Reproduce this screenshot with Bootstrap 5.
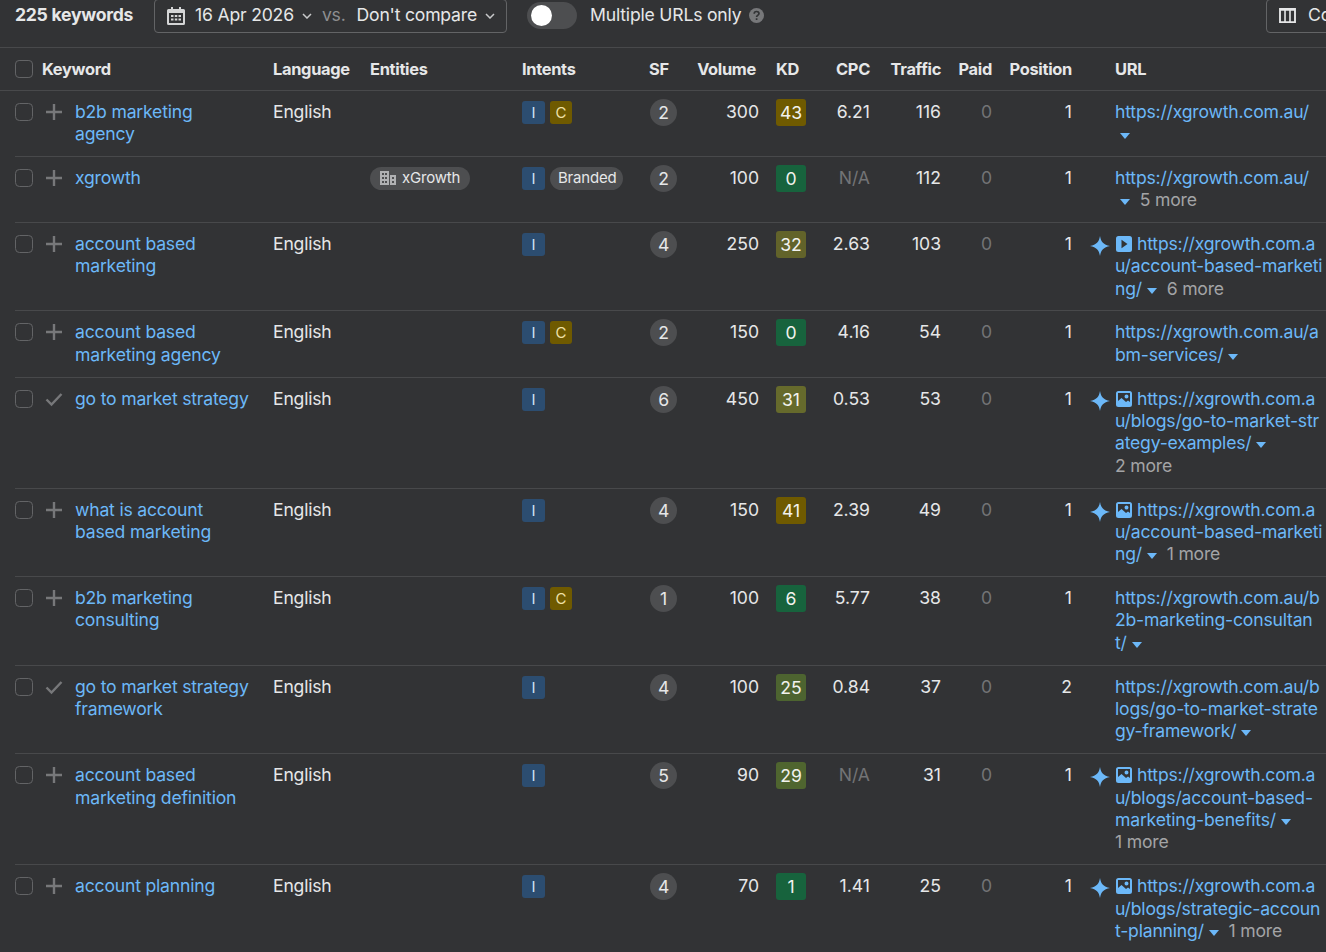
<!DOCTYPE html>
<html lang="en" data-bs-theme="dark">
<head>
    <meta charset="UTF-8" />
    <title>Keywords</title>
    <meta name="viewport" content="width=device-width, initial-scale=1" />
    <link href="https://cdn.jsdelivr.net/npm/bootstrap@5.3.2/dist/css/bootstrap.min.css" rel="stylesheet">
    <style>
        html, body { height: 100%; overflow: hidden; }
        body {
          background: #323335;
          color: #e6e7e8;
          font-family: "Inter", "Liberation Sans", sans-serif;
          font-size: 17.6px;
          line-height: 22.4px;
          letter-spacing: -.2px;
        }
        a { color: #6cb8f8; text-decoration: none; }
        svg { flex-shrink: 0; }

        /* top bar */
        .top-bar {
          width: 1390px;
          height: 58px;
          margin-top: -10px;
          padding: 0 0 6px 15px;
          border-bottom: 1px solid #48494b;
        }
        .kw-count { font-weight: 700; letter-spacing: -.27px; margin-right: 21px; }
        .bar-btn {
          height: 34px;
          border: 1px solid #636466;
          border-radius: 4px;
          padding: 0 12px;
          white-space: nowrap;
        }
        .date-btn { width: 353px; }
        .date-icon { margin-right: 10px; }
        .vs-sep { margin: 0 11px 0 10px; color: #8d8e90; }
        .bar-switch {
          width: 50px;
          height: 27px;
          margin: 0 13px 0 20px;
          border-radius: 14px;
          background: #4d4e50;
        }
        .bar-switch i { width: 21px; height: 21px; margin-left: 4px; border-radius: 50%; background: #fff; }
        .cols-btn { width: 124px; }

        /* table */
        .kw-table {
          --bs-table-bg: transparent;
          --bs-table-color: #e6e7e8;
          --bs-table-border-color: #48494b;
          table-layout: fixed;
          width: 1375px;
          margin: 0 0 0 15px;
        }
        .kw-table > thead > tr > th {
          height: 42px;
          padding: 0;
          vertical-align: middle;
          font-weight: 700;
          font-size: 16.4px;
          letter-spacing: -.3px;
          color: #e6e7e8;
          border-bottom: 1px solid #48494b;
        }
        .kw-table > thead > tr > th:first-child { position: relative; }
        .kw-table > thead > tr > th:first-child::before {
          content: "";
          position: absolute;
          left: -15px;
          bottom: -1px;
          width: 15px;
          height: 1px;
          background: #48494b;
        }
        .kw-table > thead > tr > th.vol-head { padding-right: 3px; }
        .kw-table > tbody > tr > td {
          padding: 10px 0 10.35px;
          vertical-align: top;
          border-bottom: 1px solid #48494b;
          box-shadow: none;
        }
        .kw-table .num { text-align: right; letter-spacing: 0; }
        .kw-table th.num { letter-spacing: -.3px; }
        .kw-table .kd-cell { padding-left: 17px; }
        .kw-table .url-cell { padding-left: 43px; white-space: nowrap; }
        .kw-table .muted-val { color: #737476; }

        .kw-check {
          width: 18px;
          height: 18px;
          margin: 2px 12px 0 0;
          border: 1px solid #636466;
          border-radius: 4px;
          background: transparent;
          flex-shrink: 0;
        }
        .kw-head-check { margin: 0 9px 0 0; }
        .kw-act { width: 18px; margin: 2px 12px 0 0; color: #77787a; }
        .kw-text { width: 176px; }

        .intent-tag {
          display: inline-block;
          width: 23px;
          height: 23px;
          margin-right: 5px;
          border-radius: 3px;
          font-size: 15px;
          line-height: 23px;
          text-align: center;
          vertical-align: top;
        }
        .intent-i { background: #2c4d70; color: #cfe3f5; }
        .intent-c { width: 22px; background: #6f5a00; color: #eee1a8; }
        .soft-pill {
          display: inline-flex;
          align-items: center;
          height: 23px;
          border-radius: 12px;
          background: #4d4e50;
          font-size: 15px;
          vertical-align: top;
        }
        .pill-entity { gap: 6px; width: 100px; padding-left: 10px; }
        .pill-brand { padding: 0 7px 0 8px; }
        .serp-dot {
          display: block;
          width: 27px;
          height: 27px;
          margin: -2px 0 0 1px;
          border-radius: 50%;
          background: #4d4e50;
          text-align: center;
          line-height: 27px;
        }
        .kd-box {
          display: block;
          width: 30px;
          height: 27px;
          margin-top: -2px;
          border-radius: 3px;
          color: #f2f2ee;
          text-align: center;
          line-height: 28px;
          letter-spacing: 0;
        }
        .kd-green { background: #17633d; }
        .kd-amber { background: #6f5a00; }
        .kd-32 { background: #62632a; }
        .kd-31 { background: #666a2c; }
        .kd-25 { background: #4d6430; }
        .kd-29 { background: #4f652f; }
        .url-wrap { position: relative; display: block; }
        .ai-star { position: absolute; left: -25px; top: 3px; color: #6cb8f8; }
        .url-type { margin: 0 5px 0 1px; vertical-align: -2px; color: #6cb8f8; }
        .url-caret { display: inline-block; margin: 0 5px; vertical-align: 1px; color: #6cb8f8; }
        .more-text { color: #a3a4a6; }
    </style>
</head>
<body>

<svg width="0" height="0" class="d-block">
    <defs>
        <symbol id="ic-plus" viewBox="0 0 18 18"><path d="M9 1v16M1 9h16" stroke="currentColor" stroke-width="2.400" fill="none"/></symbol>
        <symbol id="ic-check" viewBox="0 0 18 18"><path d="M1.500 9.500l5 5L16.500 4" stroke="currentColor" stroke-width="2.400" fill="none"/></symbol>
        <symbol id="ic-star" viewBox="0 0 20 20"><path d="M10 0c1 6 3.500 8.500 10 10-6.500 1.500-9 4-10 10-1-6-3.500-8.500-10-10C6.500 8.500 9 6 10 0z" fill="currentColor"/></symbol>
        <symbol id="ic-play" viewBox="0 0 16 16"><rect width="16" height="16" rx="2.500" fill="currentColor"/><path d="M5.500 3.800l6 4.200-6 4.200z" fill="#323335"/></symbol>
        <symbol id="ic-img" viewBox="0 0 16 16"><path fill-rule="evenodd" d="M2.500 0h11A2.500 2.500 0 0 1 16 2.500v11a2.500 2.500 0 0 1-2.500 2.500h-11A2.500 2.500 0 0 1 0 13.500v-11A2.500 2.500 0 0 1 2.500 0zM2 2v8l3.500-3 4.500 4 2-1.500 2 1.500V2zm8.500 1.500a2 2 0 1 1 0 4 2 2 0 0 1 0-4z" fill="currentColor"/></symbol>
        <symbol id="ic-caret" viewBox="0 0 10 6"><path d="M0 0h10L5 6z" fill="currentColor"/></symbol>
    </defs>
</svg>

<!-- Top bar -->
<div class="top-bar d-flex align-items-center">
    <span class="kw-count">225 keywords</span>
    <div class="bar-btn date-btn d-flex align-items-center">
        <svg width="18" height="18" viewBox="0 0 18 18" class="date-icon"><path fill-rule="evenodd" d="M4 0h2v2h6V0h2v2h2.500A1.500 1.500 0 0 1 18 3.500v13a1.500 1.500 0 0 1-1.500 1.500h-15A1.500 1.500 0 0 1 0 16.500v-13A1.500 1.500 0 0 1 1.500 2H4zM2 6v10h14V6zm2 2h2.500v2H4zm3.800 0h2.500v2H7.800zm3.700 0H14v2h-2.500zM4 11.500h2.500v2H4zm3.800 0h2.500v2H7.800zm3.700 0H14v2h-2.500z" fill="#d4d5d6"/></svg>
        <span>16 Apr 2026</span>
        <svg width="10" height="6" viewBox="0 0 10 6" class="ms-2"><path d="M1 1l4 4 4-4" stroke="#c8c9ca" stroke-width="1.500" fill="none"/></svg>
        <span class="vs-sep">vs.</span>
        <span>Don't compare</span>
        <svg width="10" height="6" viewBox="0 0 10 6" class="ms-2"><path d="M1 1l4 4 4-4" stroke="#c8c9ca" stroke-width="1.500" fill="none"/></svg>
    </div>
    <div class="bar-switch d-flex align-items-center"><i></i></div>
    <span>Multiple URLs only</span>
    <svg width="15" height="15" viewBox="0 0 15 15" class="ms-2"><circle cx="7.500" cy="7.500" r="7.500" fill="#77787a"/><path d="M5.200 5.800c0-3 4.800-3 4.800-.2 0 1.800-2.400 1.800-2.400 3.400M7.600 10.300v1.700" stroke="#323335" stroke-width="1.700" fill="none"/></svg>
    <div class="bar-btn cols-btn d-flex align-items-center ms-auto flex-shrink-0">
        <svg width="17" height="15" viewBox="0 0 18 16" class="me-2"><path fill-rule="evenodd" d="M0 0h18v16H0zm2 3v11h3.500V3zm5.200 0v11h3.600V3zm5.300 0v11H16V3z" fill="#e6e7e8"/></svg>
        <span class="ms-1">Columns</span>
    </div>
</div>

<!-- Keywords table -->
<table class="table kw-table">
    <colgroup>
        <col style="width:258px"><col style="width:97px"><col style="width:152px"><col style="width:127px"><col style="width:48px">
        <col style="width:62px"><col style="width:61px"><col style="width:50px"><col style="width:71px"><col style="width:51px"><col style="width:80px"><col>
    </colgroup>
    <thead>
        <tr>
            <th><div class="d-flex align-items-center"><input type="checkbox" class="kw-check kw-head-check form-check-input"><span>Keyword</span></div></th>
            <th>Language</th>
            <th>Entities</th>
            <th>Intents</th>
            <th>SF</th>
            <th class="num vol-head">Volume</th>
            <th class="kd-cell">KD</th>
            <th class="num">CPC</th>
            <th class="num">Traffic</th>
            <th class="num">Paid</th>
            <th class="num">Position</th>
            <th class="url-cell">URL</th>
        </tr>
    </thead>
    <tbody>
        <tr>
            <td><div class="d-flex"><input type="checkbox" class="kw-check form-check-input"><svg class="kw-act" height="18"><use href="#ic-plus"/></svg><a class="kw-text" href="#">b2b marketing agency</a></div></td>
            <td>English</td>
            <td></td>
            <td><span class="intent-tag intent-i">I</span><span class="intent-tag intent-c">C</span></td>
            <td><span class="serp-dot">2</span></td>
            <td class="num">300</td>
            <td class="kd-cell"><span class="kd-box kd-amber">43</span></td>
            <td class="num">6.21</td>
            <td class="num">116</td>
            <td class="num muted-val">0</td>
            <td class="num">1</td>
            <td class="url-cell"><a class="url-wrap" href="#">https://xgrowth.com.au/<br><svg class="url-caret" width="10" height="6"><use href="#ic-caret"/></svg></a></td>
        </tr>
        <tr>
            <td><div class="d-flex"><input type="checkbox" class="kw-check form-check-input"><svg class="kw-act" height="18"><use href="#ic-plus"/></svg><a class="kw-text" href="#">xgrowth</a></div></td>
            <td></td>
            <td><span class="soft-pill pill-entity"><svg width="16" height="14" viewBox="0 0 16 14"><path fill-rule="evenodd" d="M0 0h9v14H0zm2 2v2h2V2zm3 0v2h2V2zM2 6v2h2V6zm3 0v2h2V6zm-3 4v2h2v-2zm3 0v2h2v-2zm5-6h6v10h-6zm2 2v2h2V6zm0 4v2h2v-2z" fill="#b0b1b3"/></svg>xGrowth</span></td>
            <td><span class="intent-tag intent-i">I</span><span class="soft-pill pill-brand">Branded</span></td>
            <td><span class="serp-dot">2</span></td>
            <td class="num">100</td>
            <td class="kd-cell"><span class="kd-box kd-green">0</span></td>
            <td class="num muted-val">N/A</td>
            <td class="num">112</td>
            <td class="num muted-val">0</td>
            <td class="num">1</td>
            <td class="url-cell"><a class="url-wrap" href="#">https://xgrowth.com.au/<br><svg class="url-caret" width="10" height="6"><use href="#ic-caret"/></svg> <span class="more-text">5 more</span></a></td>
        </tr>
        <tr>
            <td><div class="d-flex"><input type="checkbox" class="kw-check form-check-input"><svg class="kw-act" height="18"><use href="#ic-plus"/></svg><a class="kw-text" href="#">account based marketing</a></div></td>
            <td>English</td>
            <td></td>
            <td><span class="intent-tag intent-i">I</span></td>
            <td><span class="serp-dot">4</span></td>
            <td class="num">250</td>
            <td class="kd-cell"><span class="kd-box kd-32">32</span></td>
            <td class="num">2.63</td>
            <td class="num">103</td>
            <td class="num muted-val">0</td>
            <td class="num">1</td>
            <td class="url-cell"><a class="url-wrap" href="#"><svg class="ai-star" width="20" height="20"><use href="#ic-star"/></svg><svg class="url-type" width="16" height="16"><use href="#ic-play"/></svg>https://xgrowth.com.a<br>u/account-based-marketi<br>ng/<svg class="url-caret" width="10" height="6"><use href="#ic-caret"/></svg> <span class="more-text">6 more</span></a></td>
        </tr>
        <tr>
            <td><div class="d-flex"><input type="checkbox" class="kw-check form-check-input"><svg class="kw-act" height="18"><use href="#ic-plus"/></svg><a class="kw-text" href="#">account based marketing agency</a></div></td>
            <td>English</td>
            <td></td>
            <td><span class="intent-tag intent-i">I</span><span class="intent-tag intent-c">C</span></td>
            <td><span class="serp-dot">2</span></td>
            <td class="num">150</td>
            <td class="kd-cell"><span class="kd-box kd-green">0</span></td>
            <td class="num">4.16</td>
            <td class="num">54</td>
            <td class="num muted-val">0</td>
            <td class="num">1</td>
            <td class="url-cell"><a class="url-wrap" href="#">https://xgrowth.com.au/a<br>bm-services/<svg class="url-caret" width="10" height="6"><use href="#ic-caret"/></svg></a></td>
        </tr>
        <tr>
            <td><div class="d-flex"><input type="checkbox" class="kw-check form-check-input"><svg class="kw-act" height="18"><use href="#ic-check"/></svg><a class="kw-text" href="#">go to market strategy</a></div></td>
            <td>English</td>
            <td></td>
            <td><span class="intent-tag intent-i">I</span></td>
            <td><span class="serp-dot">6</span></td>
            <td class="num">450</td>
            <td class="kd-cell"><span class="kd-box kd-31">31</span></td>
            <td class="num">0.53</td>
            <td class="num">53</td>
            <td class="num muted-val">0</td>
            <td class="num">1</td>
            <td class="url-cell"><a class="url-wrap" href="#"><svg class="ai-star" width="20" height="20"><use href="#ic-star"/></svg><svg class="url-type" width="16" height="16"><use href="#ic-img"/></svg>https://xgrowth.com.a<br>u/blogs/go-to-market-str<br>ategy-examples/<svg class="url-caret" width="10" height="6"><use href="#ic-caret"/></svg><br><span class="more-text">2 more</span></a></td>
        </tr>
        <tr>
            <td><div class="d-flex"><input type="checkbox" class="kw-check form-check-input"><svg class="kw-act" height="18"><use href="#ic-plus"/></svg><a class="kw-text" href="#">what is account based marketing</a></div></td>
            <td>English</td>
            <td></td>
            <td><span class="intent-tag intent-i">I</span></td>
            <td><span class="serp-dot">4</span></td>
            <td class="num">150</td>
            <td class="kd-cell"><span class="kd-box kd-amber">41</span></td>
            <td class="num">2.39</td>
            <td class="num">49</td>
            <td class="num muted-val">0</td>
            <td class="num">1</td>
            <td class="url-cell"><a class="url-wrap" href="#"><svg class="ai-star" width="20" height="20"><use href="#ic-star"/></svg><svg class="url-type" width="16" height="16"><use href="#ic-img"/></svg>https://xgrowth.com.a<br>u/account-based-marketi<br>ng/<svg class="url-caret" width="10" height="6"><use href="#ic-caret"/></svg> <span class="more-text">1 more</span></a></td>
        </tr>
        <tr>
            <td><div class="d-flex"><input type="checkbox" class="kw-check form-check-input"><svg class="kw-act" height="18"><use href="#ic-plus"/></svg><a class="kw-text" href="#">b2b marketing consulting</a></div></td>
            <td>English</td>
            <td></td>
            <td><span class="intent-tag intent-i">I</span><span class="intent-tag intent-c">C</span></td>
            <td><span class="serp-dot">1</span></td>
            <td class="num">100</td>
            <td class="kd-cell"><span class="kd-box kd-green">6</span></td>
            <td class="num">5.77</td>
            <td class="num">38</td>
            <td class="num muted-val">0</td>
            <td class="num">1</td>
            <td class="url-cell"><a class="url-wrap" href="#">https://xgrowth.com.au/b<br>2b-marketing-consultan<br>t/<svg class="url-caret" width="10" height="6"><use href="#ic-caret"/></svg></a></td>
        </tr>
        <tr>
            <td><div class="d-flex"><input type="checkbox" class="kw-check form-check-input"><svg class="kw-act" height="18"><use href="#ic-check"/></svg><a class="kw-text" href="#">go to market strategy framework</a></div></td>
            <td>English</td>
            <td></td>
            <td><span class="intent-tag intent-i">I</span></td>
            <td><span class="serp-dot">4</span></td>
            <td class="num">100</td>
            <td class="kd-cell"><span class="kd-box kd-25">25</span></td>
            <td class="num">0.84</td>
            <td class="num">37</td>
            <td class="num muted-val">0</td>
            <td class="num">2</td>
            <td class="url-cell"><a class="url-wrap" href="#">https://xgrowth.com.au/b<br>logs/go-to-market-strate<br>gy-framework/<svg class="url-caret" width="10" height="6"><use href="#ic-caret"/></svg></a></td>
        </tr>
        <tr>
            <td><div class="d-flex"><input type="checkbox" class="kw-check form-check-input"><svg class="kw-act" height="18"><use href="#ic-plus"/></svg><a class="kw-text" href="#">account based marketing definition</a></div></td>
            <td>English</td>
            <td></td>
            <td><span class="intent-tag intent-i">I</span></td>
            <td><span class="serp-dot">5</span></td>
            <td class="num">90</td>
            <td class="kd-cell"><span class="kd-box kd-29">29</span></td>
            <td class="num muted-val">N/A</td>
            <td class="num">31</td>
            <td class="num muted-val">0</td>
            <td class="num">1</td>
            <td class="url-cell"><a class="url-wrap" href="#"><svg class="ai-star" width="20" height="20"><use href="#ic-star"/></svg><svg class="url-type" width="16" height="16"><use href="#ic-img"/></svg>https://xgrowth.com.a<br>u/blogs/account-based-<br>marketing-benefits/<svg class="url-caret" width="10" height="6"><use href="#ic-caret"/></svg><br><span class="more-text">1 more</span></a></td>
        </tr>
        <tr>
            <td><div class="d-flex"><input type="checkbox" class="kw-check form-check-input"><svg class="kw-act" height="18"><use href="#ic-plus"/></svg><a class="kw-text" href="#">account planning</a></div></td>
            <td>English</td>
            <td></td>
            <td><span class="intent-tag intent-i">I</span></td>
            <td><span class="serp-dot">4</span></td>
            <td class="num">70</td>
            <td class="kd-cell"><span class="kd-box kd-green">1</span></td>
            <td class="num">1.41</td>
            <td class="num">25</td>
            <td class="num muted-val">0</td>
            <td class="num">1</td>
            <td class="url-cell"><a class="url-wrap" href="#"><svg class="ai-star" width="20" height="20"><use href="#ic-star"/></svg><svg class="url-type" width="16" height="16"><use href="#ic-img"/></svg>https://xgrowth.com.a<br>u/blogs/strategic-accoun<br>t-planning/<svg class="url-caret" width="10" height="6"><use href="#ic-caret"/></svg> <span class="more-text">1 more</span></a></td>
        </tr>
    </tbody>
</table>

<script src="https://cdn.jsdelivr.net/npm/bootstrap@5.3.2/dist/js/bootstrap.bundle.min.js"></script>
</body>
</html>
